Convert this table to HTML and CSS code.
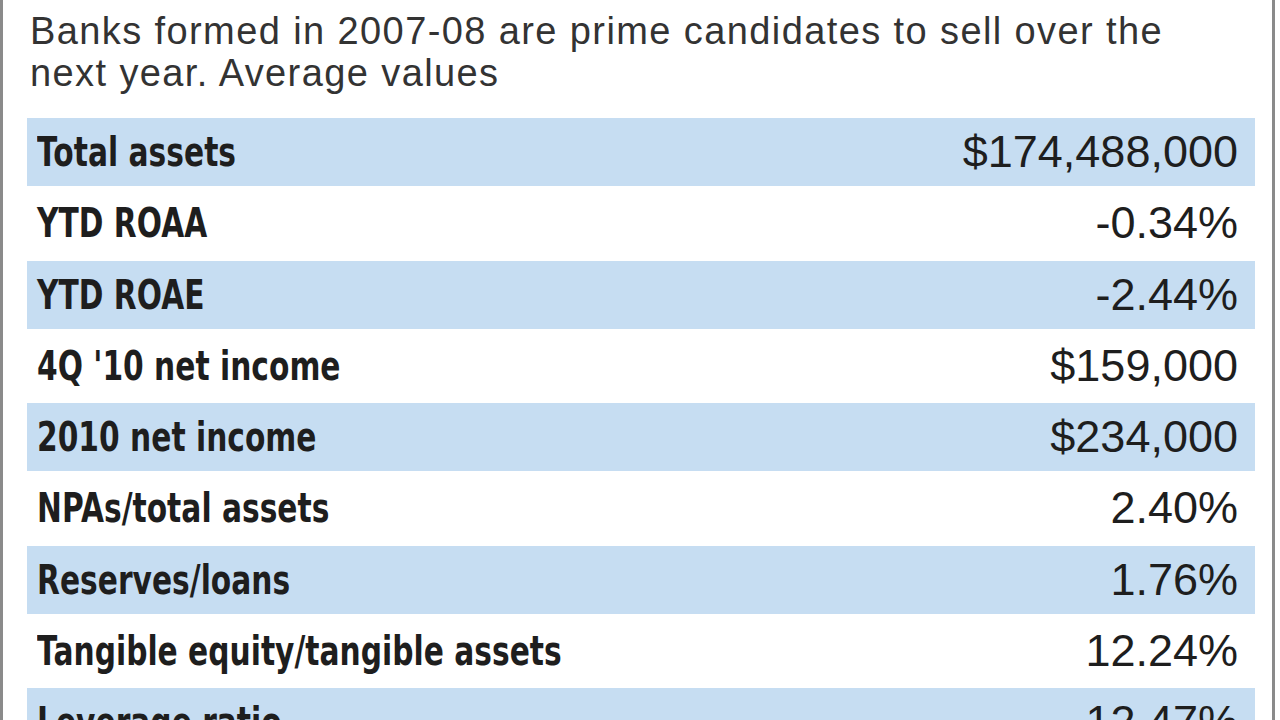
FILE: index.html
```html
<!DOCTYPE html>
<html>
<head>
<meta charset="utf-8">
<link rel="stylesheet" href="styles.css">
</head>
<body>
<div class="frame">
  <p class="intro">Banks formed in 2007-08 are prime candidates to sell over the next year. Average values</p>
  <div class="table">
    <div class="row"><span class="label">Total assets</span><span class="value">$174,488,000</span></div>
    <div class="row"><span class="label">YTD ROAA</span><span class="value">-0.34%</span></div>
    <div class="row"><span class="label">YTD ROAE</span><span class="value">-2.44%</span></div>
    <div class="row"><span class="label">4Q '10 net income</span><span class="value">$159,000</span></div>
    <div class="row"><span class="label">2010 net income</span><span class="value">$234,000</span></div>
    <div class="row"><span class="label">NPAs/total assets</span><span class="value">2.40%</span></div>
    <div class="row"><span class="label">Reserves/loans</span><span class="value">1.76%</span></div>
    <div class="row"><span class="label">Tangible equity/tangible assets</span><span class="value">12.24%</span></div>
    <div class="row"><span class="label">Leverage ratio</span><span class="value">12.47%</span></div>
  </div>
</div>
</body>
</html>
```
FILE: styles.css
```css
html, body {
  margin: 0;
  padding: 0;
  background: #ffffff;
  overflow: hidden;
}
.frame {
  width: 1269px;
  height: 720px;
  border-left: 3px solid #8a8a8a;
  border-right: 3px solid #8a8a8a;
  box-sizing: content-box;
  overflow: hidden;
}
.intro {
  margin: 10px 60px 0 27px;
  font-family: "Liberation Sans", Arial, sans-serif;
  font-size: 38px;
  line-height: 42px;
  color: #333333;
  letter-spacing: 1.4px;
  height: 84px;
}
.table {
  margin: 24px 17px 0 24px;
  display: flex;
  flex-direction: column;
  gap: 3.25px;
}
.row {
  height: 68px;
  display: flex;
  align-items: center;
  justify-content: space-between;
  padding: 0 17px 0 10px;
  color: #1e1e1e;
  overflow: hidden;
}
.row:nth-child(odd) {
  background: #c6ddf2;
}
.label {
  font-family: "DejaVu Sans", "Liberation Sans", sans-serif;
  font-weight: bold;
  font-size: 41px;
  white-space: nowrap;
  transform: scaleX(0.725);
  transform-origin: left center;
}
.value {
  font-family: "Liberation Sans", Arial, sans-serif;
  font-size: 45px;
  white-space: nowrap;
}
```
